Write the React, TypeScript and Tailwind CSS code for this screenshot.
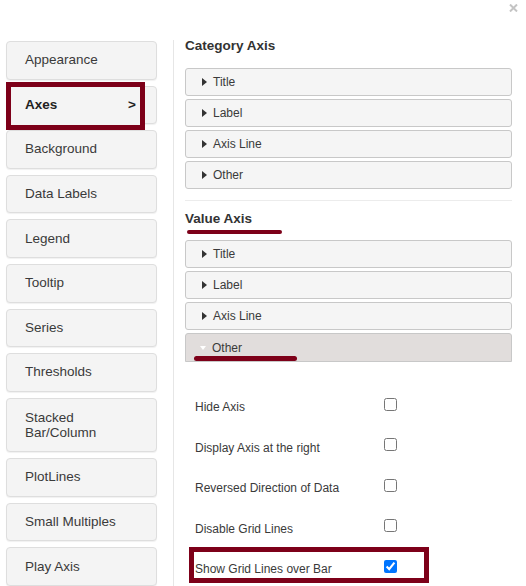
const sideItems = [
  "Appearance",
  "Axes",
  "Background",
  "Data Labels",
  "Legend",
  "Tooltip",
  "Series",
  "Thresholds",
  "Stacked Bar/Column",
  "PlotLines",
  "Small Multiples",
  "Play Axis",
];

const options = [
  { label: "Hide Axis", checked: false },
  { label: "Display Axis at the right", checked: false },
  { label: "Reversed Direction of Data", checked: false },
  { label: "Disable Grid Lines", checked: false },
  { label: "Show Grid Lines over Bar", checked: true, marked: true },
];

function SideButton({ label }: { label: string }) {
  if (label === "Axes") {
    return (
      <div className="relative h-[39px] border border-[#dedede] rounded-[4px] bg-[#f4f4f4] shadow-[0_1px_1px_rgba(0,0,0,0.06)]">
        {/* highlight box */}
        <div className="absolute -left-px -top-[5px] w-[139px] h-[48px] border-[5px] border-[#7d0019] bg-[#f4f4f4] flex items-center justify-between pl-[14px] pr-[4px] text-[13.5px] font-bold text-[#222]">
          <span>Axes</span>
          <span>&gt;</span>
        </div>
      </div>
    );
  }
  const tall = label === "Stacked Bar/Column";
  return (
    <div
      className={`flex items-center pl-[18px] border border-[#dedede] rounded-[4px] bg-[#f4f4f4] shadow-[0_1px_1px_rgba(0,0,0,0.06)] text-[13.5px] text-[#3a3a3a] ${
        tall ? "h-[55px] leading-[15px]" : "h-[39px]"
      }`}
    >
      {tall ? (
        <span>
          Stacked
          <br />
          Bar/Column
        </span>
      ) : (
        <span>{label}</span>
      )}
    </div>
  );
}

function AccItem({ label, open }: { label: string; open?: boolean }) {
  if (open) {
    return (
      <div className="relative h-[29px] border border-[#c8c8c8] rounded-t-[3px] bg-[#e1dddc] flex items-center pl-[14px] text-[12px] text-[#3a3a3a]">
        <span className="w-0 h-0 border-x-[3.5px] border-x-transparent border-t-[4px] border-t-white" />
        <span className="ml-[6px]">{label}</span>
        <div className="absolute left-[8px] top-[22px] w-[103px] h-[5px] rounded-full bg-[#7d0019]" />
      </div>
    );
  }
  return (
    <div className="h-[28px] border border-[#c8c8c8] rounded-[3px] bg-[#f5f5f5] flex items-center pl-[16px] text-[12px] text-[#3a3a3a]">
      <span className="w-0 h-0 border-y-[4px] border-y-transparent border-l-[5px] border-l-[#333]" />
      <span className="ml-[6px]">{label}</span>
    </div>
  );
}

export default function App() {
  return (
    <div
      className="relative w-[526px] h-[586px] overflow-hidden bg-white flex"
      style={{ fontFamily: '"Liberation Sans", Arial, sans-serif' }}
    >
      {/* close */}
      <svg className="absolute left-[509px] top-[4px]" width="9" height="8" viewBox="0 0 9 8">
        <path d="M1 0.5 L8 7.5 M8 0.5 L1 7.5" stroke="#c4c4c4" strokeWidth="2" />
      </svg>

      {/* Nav */}
      <div className="w-[151px] ml-[6px] mt-[41px] flex flex-col gap-[6px] shrink-0">
        {sideItems.map((s) => (
          <SideButton key={s} label={s} />
        ))}
      </div>

      {/* divider */}
      <div className="w-px ml-[16px] mt-[40px] bg-[#e6e6e6] shrink-0" />

      {/* Panel */}
      <div className="w-[327px] ml-[11px] pt-[37px] shrink-0">
        <div className="h-[18px] leading-[18px] text-[13.5px] font-bold text-[#333]">Category Axis</div>
        <div className="mt-[13px] flex flex-col gap-[3px]">
          <AccItem label="Title" />
          <AccItem label="Label" />
          <AccItem label="Axis Line" />
          <AccItem label="Other" />
        </div>

        <div className="mt-[11px] h-px bg-[#ececec]" />

        <div className="mt-[9px] h-[18px] leading-[18px] text-[13.5px] font-bold text-[#333]">Value Axis</div>
        <div className="mt-[2px] ml-[2px] w-[95px] h-[4px] rounded-full bg-[#7d0019]" />
        <div className="mt-[6px] flex flex-col gap-[3px]">
          <AccItem label="Title" />
          <AccItem label="Label" />
          <AccItem label="Axis Line" />
          <AccItem label="Other" open />
        </div>

        <div className="mt-[25px] pl-[10px]">
          {options.map((o) => (
            <div key={o.label} className="relative h-[40.5px] flex items-center text-[12px] text-[#3a3a3a]">
              {o.marked && (
                <div className="absolute -left-[6px] -top-[2px] w-[240px] h-[36px] border-[5px] border-[#7d0019]" />
              )}
              <span className="w-[189px]">{o.label}</span>
              <input
                type="checkbox"
                defaultChecked={o.checked}
                className="m-0 mb-[6px] w-[13px] h-[13px] accent-[#0075ff]"
              />
            </div>
          ))}
        </div>
      </div>
    </div>
  );
}
